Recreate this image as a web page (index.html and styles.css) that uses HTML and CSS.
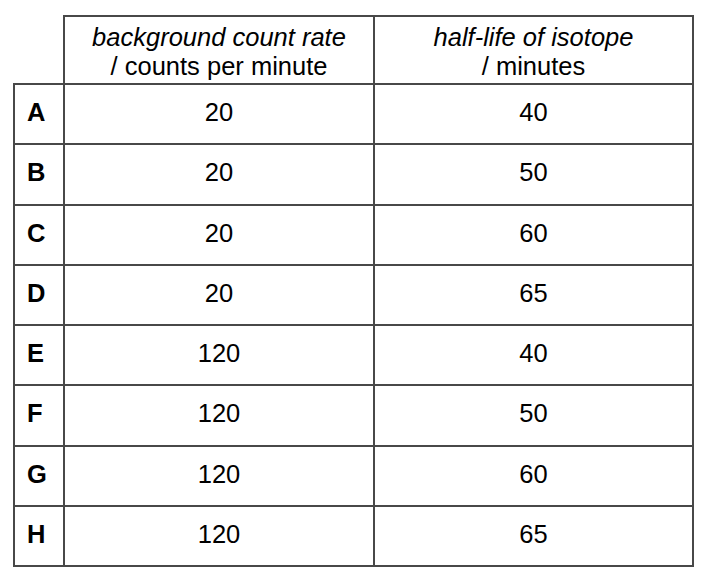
FILE: index.html
```html
<!DOCTYPE html>
<html>
<head>
<meta charset="utf-8">
<link rel="stylesheet" href="styles.css">
</head>
<body>
<div class="wrap">
<table class="data">
  <colgroup><col class="c1"><col class="c2"><col class="c3"></colgroup>
  <thead>
    <tr class="head">
      <th class="corner"></th>
      <th><i>background count rate</i><br>/ counts per minute</th>
      <th><i>half-life of isotope</i><br>/ minutes</th>
    </tr>
  </thead>
  <tbody>
    <tr><th class="lbl">A</th><td>20</td><td>40</td></tr>
    <tr><th class="lbl">B</th><td>20</td><td>50</td></tr>
    <tr><th class="lbl">C</th><td>20</td><td>60</td></tr>
    <tr><th class="lbl">D</th><td>20</td><td>65</td></tr>
    <tr><th class="lbl">E</th><td>120</td><td>40</td></tr>
    <tr><th class="lbl">F</th><td>120</td><td>50</td></tr>
    <tr><th class="lbl">G</th><td>120</td><td>60</td></tr>
    <tr><th class="lbl">H</th><td>120</td><td>65</td></tr>
  </tbody>
</table>
</div>
</body>
</html>
```
FILE: styles.css
```css
html, body {
  margin: 0;
  padding: 0;
  background: #ffffff;
}
.wrap {
  padding: 15px 0 0 13px;
}
.data {
  border-collapse: collapse;
  table-layout: fixed;
  width: 679px;
  font-family: "Liberation Sans", Arial, sans-serif;
  font-size: 25.5px;
  color: #000;
}
.c1 { width: 50px; }
.c2 { width: 310px; }
.c3 { width: 319px; }
.data th, .data td {
  border: 2px solid #484848;
  padding: 0;
  text-align: center;
  vertical-align: middle;
  font-weight: normal;
  line-height: 29px;
}
.data .head {
  height: 68px;
}
.data .head th {
  padding-top: 3px;
}
.data .head th.corner {
  border-top: none;
  border-left: none;
}
.data tbody tr {
  height: 60.25px;
}
.data tbody td, .data tbody th {
  padding-bottom: 3px;
}
.data th.lbl {
  font-weight: bold;
  text-align: left;
  padding-left: 12px;
}
```
